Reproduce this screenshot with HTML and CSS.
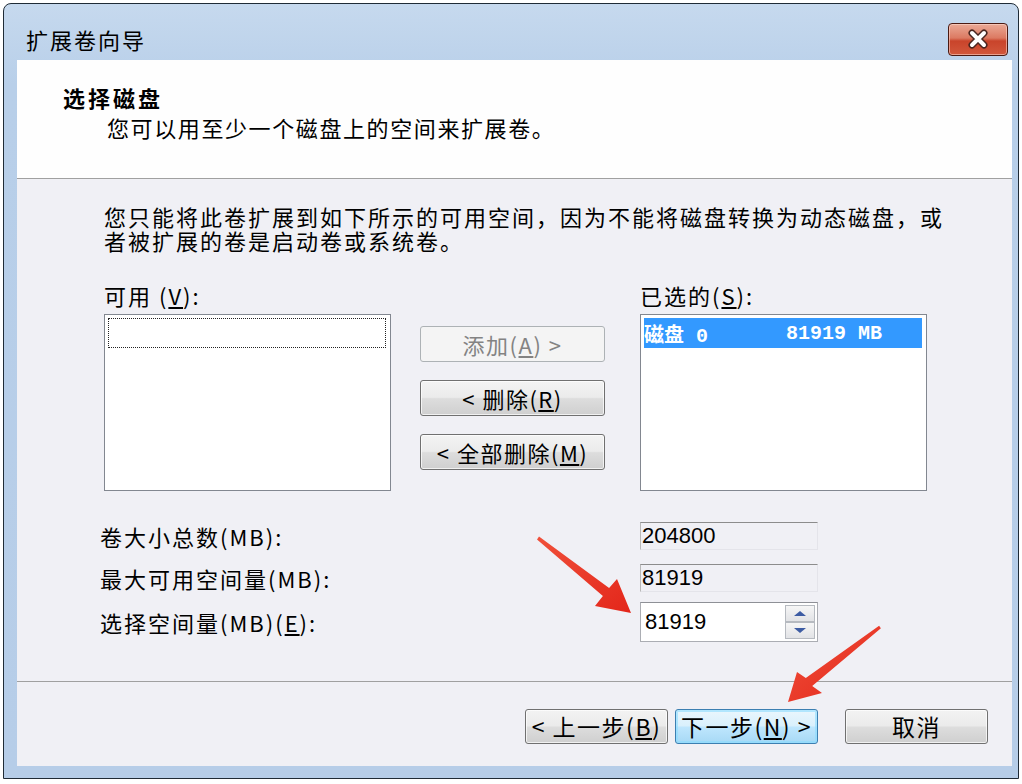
FILE: index.html
```html
<!DOCTYPE html>
<html lang="zh-CN">
<head>
    <meta charset="UTF-8">
    <meta name="viewport" content="width=device-width, initial-scale=1.0">
    <title>扩展卷向导</title>
    <link rel="stylesheet" href="styles.css">
</head>
<body>
    <div class="window">
        <div class="titlebar">
            <span class="window-title">扩展卷向导</span>
            <button class="close-btn" title="关闭">
                <svg width="26" height="20" viewBox="0 0 26 20">
                    <path d="M7 4 L19 16 M19 4 L7 16" stroke="#4a2620" stroke-width="7" stroke-linecap="round"/>
                    <path d="M7 4 L19 16 M19 4 L7 16" stroke="#ffffff" stroke-width="4" stroke-linecap="round"/>
                </svg>
            </button>
        </div>

        <div class="client">
            <div class="wizard-header">
                <div class="wizard-title">选择磁盘</div>
                <div class="wizard-subtitle">您可以用至少一个磁盘上的空间来扩展卷。</div>
            </div>

            <div class="wizard-body">
                <p class="intro">您只能将此卷扩展到如下所示的可用空间，因为不能将磁盘转换为动态磁盘，或<br>者被扩展的卷是启动卷或系统卷。</p>

                <div class="picker">
                    <div class="picker-label">可用 (<u>V</u>):</div>
                    <div></div>
                    <div class="picker-label">已选的(<u>S</u>):</div>

                    <div class="listbox">
                        <div class="focus-row"></div>
                    </div>
                    <div class="picker-actions">
                        <button class="btn" disabled>添加(<u>A</u>) &gt;</button>
                        <button class="btn">&lt; 删除(<u>R</u>)</button>
                        <button class="btn">&lt; 全部删除(<u>M</u>)</button>
                    </div>
                    <div class="listbox">
                        <div class="list-row selected">
                            <span class="disk-name">磁盘 0</span>
                            <span>81919 MB</span>
                        </div>
                    </div>
                </div>

                <div class="sizes">
                    <div class="size-row">
                        <span class="size-label">卷大小总数(MB):</span>
                        <span class="readonly-field">204800</span>
                    </div>
                    <div class="size-row">
                        <span class="size-label">最大可用空间量(MB):</span>
                        <span class="readonly-field">81919</span>
                    </div>
                    <div class="size-row spin-row">
                        <span class="size-label">选择空间量(MB)(<u>E</u>):</span>
                        <div class="spinbox">
                            <span class="spin-value">81919</span>
                            <div class="spin-buttons">
                                <span class="spin-btn"><span class="tri-up"></span></span>
                                <span class="spin-btn"><span class="tri-down"></span></span>
                            </div>
                        </div>
                    </div>
                </div>
            </div>

            <div class="wizard-footer">
                <button class="btn btn-nav">&lt; 上一步(<u>B</u>)</button>
                <button class="btn btn-nav btn-default">下一步(<u>N</u>) &gt;</button>
                <button class="btn btn-nav btn-cancel">取消</button>
            </div>
        </div>
    </div>

    <!-- red arrows drawn over the screenshot -->
    <svg class="annotations" width="1022" height="784" viewBox="0 0 1022 784">
        <defs>
            <linearGradient id="arrowFill" x1="0" y1="0" x2="1" y2="1">
                <stop offset="0" stop-color="#f0503a"/>
                <stop offset="1" stop-color="#e3261a"/>
            </linearGradient>
        </defs>
        <polygon fill="url(#arrowFill)" points="537,539.5 602.9,595.9 595,606 631,613 617,579 609.1,588.1 539,536.5"/>
        <polygon fill="url(#arrowFill)" points="879.1,625.8 805.8,678.1 797,672 788,702 822,693 812.2,685.9 880.9,628.2"/>
    </svg>
</body>
</html>
```

FILE: styles.css
```css
body {
    margin: 0;
    background-color: #ffffff;
    font-family: "Noto Sans CJK SC", "Liberation Sans", sans-serif;
    color: #000;
    overflow: hidden;
}

u {
    text-decoration: underline;
    text-underline-offset: 2px;
}

.window {
    margin: 3px 0 0 3px;
    width: 995px;
    border: 1px solid #1f2b36;
    border-radius: 8px 8px 0 0;
    padding: 0 6px 12px 13px;
    background: linear-gradient(#c6d9ee, #b8cfe9 80px, #b6cde8);
}

.titlebar {
    height: 56px;
    display: flex;
    align-items: center;
    justify-content: space-between;
    padding: 14px 4px 0 9px;
    box-sizing: border-box;
}

.window-title {
    font-size: 22px;
    letter-spacing: 2px;
    line-height: 30px;
}

.close-btn {
    width: 60px;
    height: 33px;
    border: 1px solid #4b1a12;
    border-radius: 4px;
    background: linear-gradient(#eaa996, #dc7a62 45%, #c9442b 55%, #d2583c);
    box-shadow: inset 0 0 0 1px rgba(255, 220, 210, 0.55);
    display: flex;
    align-items: center;
    justify-content: center;
    padding: 0;
}

.client {
    height: 706px;
    display: flex;
    flex-direction: column;
    background-color: #f0f0f5;
}

.wizard-header {
    height: 119px;
    box-sizing: border-box;
    background-color: #fefefe;
    border-bottom: 1px solid #a0a0a0;
    padding: 22px 0 0 46px;
}

.wizard-title {
    font-size: 22px;
    font-weight: bold;
    letter-spacing: 3px;
    line-height: 30px;
}

.wizard-subtitle {
    font-size: 22px;
    letter-spacing: 1.6px;
    line-height: 30px;
    padding-left: 44px;
}

.wizard-body {
    height: 503px;
    box-sizing: border-box;
    border-bottom: 1px solid #a0a0a0;
    padding: 25px 0 0 83px;
}

.intro {
    margin: 0 0 0 4px;
    font-size: 22px;
    letter-spacing: 2px;
    line-height: 24px;
}

.picker {
    margin: 31px 0 0 4px;
    display: grid;
    grid-template-columns: 287px 249px 287px;
    row-gap: 7px;
}

.picker-label {
    font-size: 22px;
    letter-spacing: 2px;
    line-height: 24px;
}

.listbox {
    height: 177px;
    box-sizing: border-box;
    border: 1px solid #828790;
    background-color: #ffffff;
    padding: 3px 4px 3px 3px;
}

.focus-row {
    height: 30px;
    box-sizing: border-box;
    border: 1px dotted #222;
}

.list-row {
    height: 30px;
    display: flex;
    align-items: center;
    font-family: "Liberation Mono", "Noto Sans CJK SC", monospace;
    font-size: 20px;
    font-weight: bold;
}

.list-row.selected {
    background-color: #3399ff;
    color: #ffffff;
}

.disk-name {
    width: 142px;
}

.picker-actions {
    padding: 12px 0 0 29px;
    display: flex;
    flex-direction: column;
    gap: 18px;
}

.btn {
    width: 185px;
    height: 36px;
    border: 1px solid #707070;
    border-radius: 3px;
    background: linear-gradient(#f3f3f3, #ebebeb 48%, #dddddd 52%, #cfcfcf);
    box-shadow: inset 0 0 0 1px rgba(255, 255, 255, 0.7);
    font-family: "Noto Sans CJK SC", sans-serif;
    font-size: 22px;
    letter-spacing: 1.5px;
    color: #000;
    padding: 0;
    line-height: 1;
}

.btn:disabled {
    border-color: #adb2b5;
    background: #f4f4f4;
    box-shadow: none;
    color: #838383;
}

.sizes {
    margin-top: 31px;
    display: flex;
    flex-direction: column;
    gap: 14px;
}

.size-row {
    display: flex;
    align-items: center;
}

.size-row.spin-row {
    margin-top: -4px;
}

.size-label {
    width: 540px;
    font-size: 22px;
    letter-spacing: 2px;
    line-height: 24px;
}

.readonly-field {
    width: 178px;
    height: 28px;
    box-sizing: border-box;
    border-top: 1px solid #8c8c8c;
    border-left: 1px solid #b8b8b8;
    border-right: 1px solid #e4e4ea;
    border-bottom: 1px solid #e4e4ea;
    font-family: "Liberation Sans", sans-serif;
    font-size: 22px;
    line-height: 26px;
    padding-left: 1px;
}

.spinbox {
    width: 178px;
    height: 40px;
    box-sizing: border-box;
    border: 1px solid #abadb3;
    border-top-color: #8e9096;
    background-color: #ffffff;
    display: flex;
    align-items: center;
    justify-content: space-between;
    padding: 2px 2px 2px 4px;
}

.spin-value {
    font-family: "Liberation Sans", sans-serif;
    font-size: 22px;
}

.spin-buttons {
    width: 30px;
    height: 34px;
    display: flex;
    flex-direction: column;
}

.spin-btn {
    flex: 1;
    border: 1px solid #b6bac0;
    background: linear-gradient(#f6f6f6, #e2e3e6);
    display: flex;
    align-items: center;
    justify-content: center;
}

.tri-up,
.tri-down {
    width: 0;
    height: 0;
    border-left: 6px solid transparent;
    border-right: 6px solid transparent;
}

.tri-up {
    border-bottom: 5px solid #3d5ca3;
}

.tri-down {
    border-top: 5px solid #3d5ca3;
}

.wizard-footer {
    flex: 1;
    display: flex;
    justify-content: flex-end;
    align-items: flex-start;
    padding: 27px 24px 0 0;
    gap: 7px;
}

.btn-nav {
    width: 143px;
    height: 35px;
    font-size: 23px;
}

.btn-default {
    border-color: #3c7fb1;
    background: linear-gradient(#eaf6fd, #d9f0fc 48%, #bee6fd 52%, #a7d9f5);
    box-shadow: inset 0 0 0 2px rgba(140, 220, 255, 0.6);
}

.btn-cancel {
    margin-left: 20px;
}

.annotations {
    position: absolute;
    top: 0;
    left: 0;
    pointer-events: none;
}
```
